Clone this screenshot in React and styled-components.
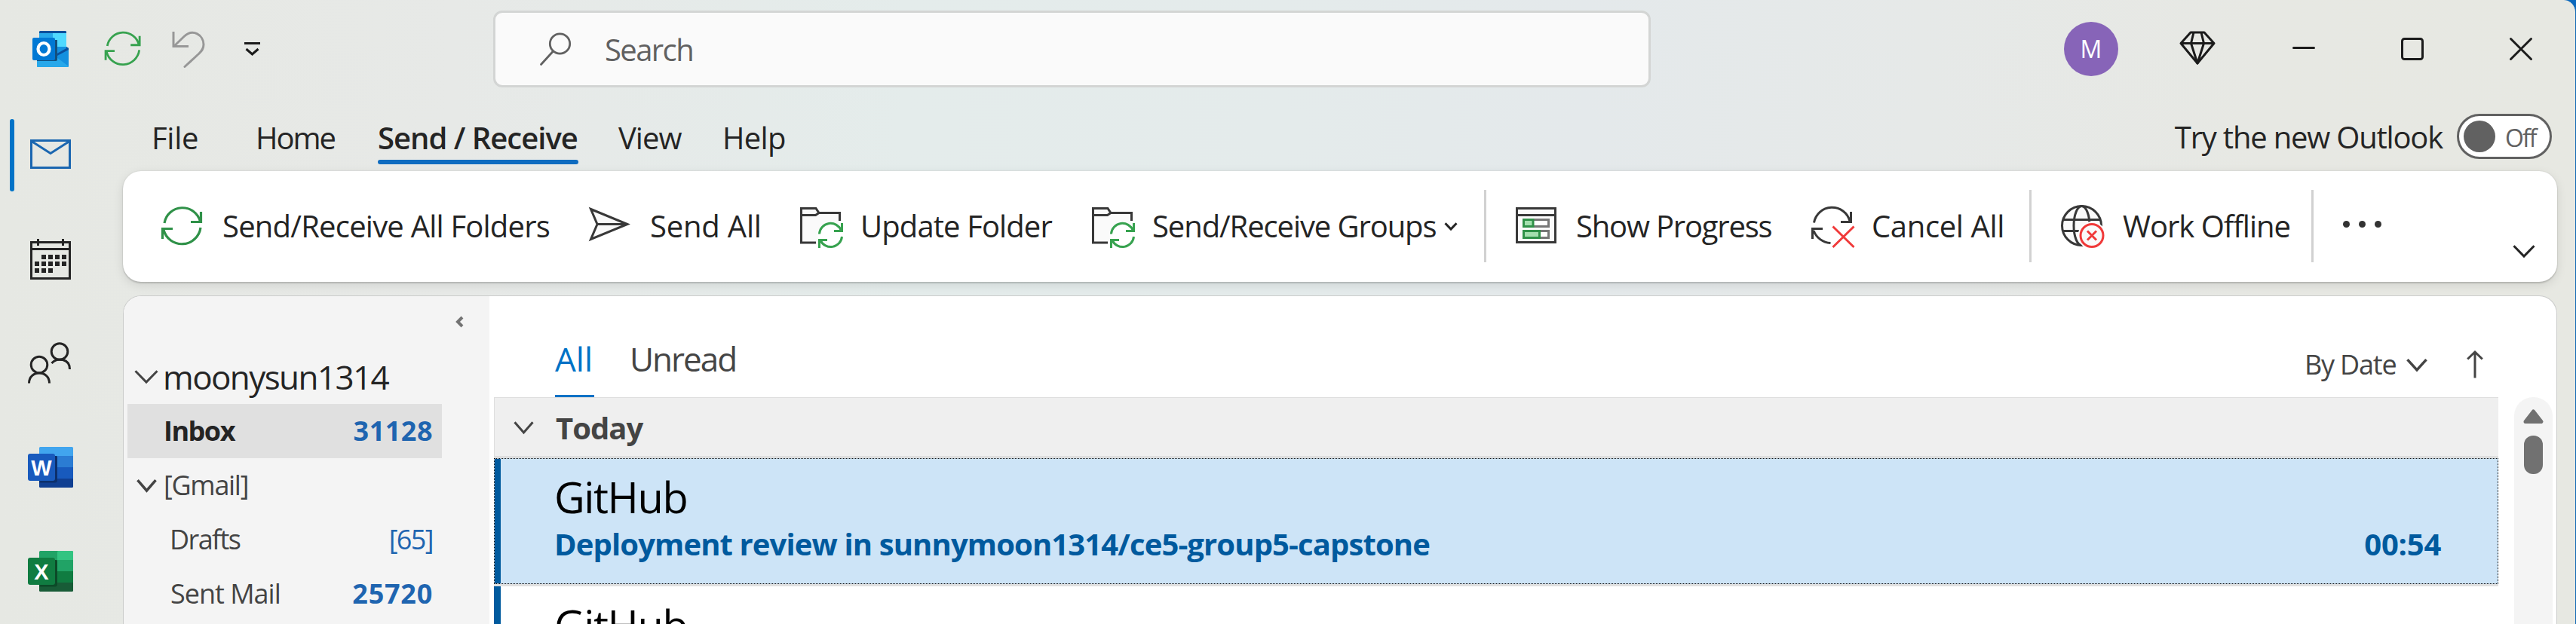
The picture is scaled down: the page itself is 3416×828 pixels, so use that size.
import React from 'react';
import styled, { createGlobalStyle } from 'styled-components';

const GlobalStyle = createGlobalStyle`
  * { box-sizing: border-box; }
  body { margin: 0; background: #0b68bd; overflow: hidden; }
  svg { display: block; flex: none; overflow: visible; }
`;

const Window = styled.div`
  width: 3416px;
  height: 828px;
  overflow: hidden;
  display: flex;
  flex-direction: column;
  border-right: 1px solid #1469b4;
  border-top-right-radius: 16px;
  background: linear-gradient(90deg, #e6e8e3 0, #e7e9e7 600px, #e4eceb 1200px, #e4ebeb 1700px, #e4e9eb 2100px, #e6e9e8 2550px, #e7e8e3 3000px, #e7e8e2 100%);
  font-family: "Open Sans", "Noto Sans", sans-serif;
  color: #242424;
`;

const Label = styled.span`
  flex: none;
  white-space: pre;
  font-size: ${(p) => p.$size || 40}px;
  font-weight: ${(p) => p.$weight || 400};
  letter-spacing: ${(p) => p.$track || 0}px;
  line-height: ${(p) => p.$line || 56}px;
  color: ${(p) => p.$color || 'inherit'};
`;

/* ---------- title bar ---------- */

const TitleBar = styled.header`
  flex: none;
  height: 130px;
  display: flex;
  align-items: center;
  padding-left: 43px;
`;

const QuickAccess = styled.div`
  width: 611px;
  display: flex;
  align-items: center;
`;

const QuickButton = styled.div`
  flex: none;
  width: ${(p) => p.$width}px;
  display: flex;
  align-items: center;
`;

const SearchBox = styled.div`
  width: 1535px;
  height: 102px;
  display: flex;
  align-items: center;
  gap: 44px;
  padding-left: 59px;
  border: 3px solid #d3d5d4;
  border-radius: 12px;
  background: #fafafa;
  color: #616161;
`;

const SearchLabel = styled(Label)`
  padding-top: 2px;
`;

const Avatar = styled.div`
  width: 72px;
  height: 72px;
  margin-left: 548px;
  border-radius: 50%;
  background: #8764b8;
  color: #fff;
  display: flex;
  align-items: center;
  justify-content: center;
`;

const WindowControls = styled.div`
  flex: none;
  display: flex;
  align-items: center;
  margin-left: 81px;
`;

const Control = styled.div`
  flex: none;
  width: ${(p) => p.$width}px;
`;

/* ---------- body ---------- */

const Body = styled.div`
  flex: 1;
  min-height: 0;
  display: flex;
`;

const Rail = styled.nav`
  flex: none;
  width: 163px;
  padding-top: 7px;
`;

const RailItem = styled.div`
  height: 138px;
  display: flex;
  align-items: center;
  padding-left: 13px;
  gap: 15px;
`;

const ActiveBar = styled.div`
  width: 6px;
  height: 96px;
  border-radius: 3px;
  background: ${(p) => (p.$on ? '#0173c7' : 'transparent')};
`;

const Main = styled.main`
  flex: none;
  width: 3228px;
  display: flex;
  flex-direction: column;
`;

const TabRow = styled.div`
  flex: none;
  height: 97px;
  display: flex;
  align-items: flex-start;
  padding: 25px 7px 0 38px;
`;

const RibbonTab = styled.div`
  flex: none;
  width: ${(p) => p.$width}px;
  height: 63px;
  display: flex;
  flex-direction: column;
  justify-content: space-between;
`;

const TabUnderline = styled.div`
  height: 6px;
  width: 266px;
  border-radius: 3px;
  background: #0f6cc0;
`;

const TryNew = styled.div`
  margin-left: auto;
  height: 60px;
  margin-top: -4px;
  display: flex;
  align-items: center;
  gap: 19px;
`;

const TryLabel = styled(Label)`
  padding-top: 2px;
`;

const Toggle = styled.div`
  width: 126px;
  height: 60px;
  border: 3px solid #616161;
  border-radius: 30px;
  background: #fff;
  display: flex;
  align-items: center;
  gap: 13px;
  padding-left: 6px;
`;

const ToggleLabel = styled(Label)`
  padding-top: 3px;
`;

const Knob = styled.div`
  width: 42px;
  height: 42px;
  border-radius: 50%;
  background: #616161;
`;

const Ribbon = styled.div`
  flex: none;
  height: 147px;
  display: flex;
  align-items: flex-start;
  padding: 25px 29px 0 49px;
  border-radius: 24px;
  background: #fff;
  box-shadow: 0 2px 2px rgba(0, 0, 0, 0.14), 0 0 2px rgba(0, 0, 0, 0.12), 0 4px 14px rgba(0, 0, 0, 0.1);
`;

const RibbonButton = styled.div`
  flex: none;
  width: ${(p) => p.$width}px;
  height: 98px;
  display: flex;
  align-items: center;
  gap: 23px;
`;

const CommandLabel = styled(Label)`
  padding-bottom: 3px;
`;

const MenuArrow = styled.div`
  margin: 0 0 2px -12px;
`;

const Divider = styled.div`
  flex: none;
  width: 3px;
  height: 96px;
  margin-right: ${(p) => p.$after}px;
  background: #d1d1d1;
`;

const More = styled.div`
  display: flex;
  gap: 12px;
  padding-top: 41px;
`;

const Dot = styled.i`
  width: 9px;
  height: 9px;
  border-radius: 50%;
  background: #333;
`;

const Collapse = styled.div`
  margin: 73px 0 0 auto;
`;

const Panel = styled.section`
  flex: 1;
  min-height: 0;
  margin-top: 18px;
  display: flex;
  overflow: hidden;
  background: #fff;
  border: 1px solid #cbcccb;
  border-bottom: 0;
  border-radius: 24px 24px 0 0;
`;

const Folders = styled.aside`
  flex: none;
  width: 485px;
  padding: 27px 63px 0 5px;
  background: #f4f4f4;
`;

const CollapsePane = styled.div`
  height: 44px;
  width: 445px;
  display: flex;
  justify-content: flex-end;
`;

const FolderRow = styled.div`
  height: 72px;
  display: flex;
  align-items: center;
  padding: 0 12px ${(p) => p.$lift || 0}px ${(p) => p.$indent}px;
  gap: ${(p) => p.$gap || 0}px;
  background: ${(p) => (p.$selected ? '#e0e0e0' : 'transparent')};
  color: ${(p) => p.$color || '#444'};
`;

const Count = styled(Label)`
  margin-left: auto;
  color: #1f65b0;
`;

const MessagePane = styled.div`
  flex: none;
  width: 2664px;
  margin-left: 6px;
`;

const ListHeader = styled.div`
  height: 134px;
  display: flex;
  padding: 53px 26px 0 81px;
  color: #444;
`;

const FilterTab = styled.div`
  flex: none;
  width: ${(p) => p.$width}px;
  margin-right: 47px;
  display: flex;
  flex-direction: column;
  justify-content: space-between;
  color: ${(p) => (p.$active ? '#0072c6' : '#444')};
  border-bottom: 3px solid ${(p) => (p.$active ? '#0072c6' : 'transparent')};
`;

const Sort = styled.div`
  margin: 8px 0 0 auto;
  height: 60px;
  display: flex;
  align-items: center;
`;

const ListColumns = styled.div`
  display: flex;
`;

const List = styled.div`
  flex: none;
  width: 2658px;
`;

const GroupHeader = styled.div`
  height: 81px;
  display: flex;
  align-items: center;
  gap: 29px;
  padding: 2px 0 0 25px;
  background: #efefef;
  border: 0 solid #dedede;
  border-width: 1px 0 3px 1px;
  color: #444;
`;

const MailSlot = styled.article`
  height: 170px;
  border-bottom: 3px solid #e0e0e0;
`;

const Mail = styled.div`
  height: 167px;
  display: flex;
  align-items: stretch;
  border: 1px ${(p) => (p.$selected ? 'dotted #111' : 'solid transparent')};
  background: ${(p) => (p.$selected ? '#cde4f7' : '#fff')};
`;

const UnreadBar = styled.div`
  flex: none;
  width: ${(p) => (p.$wide ? 9 : 8)}px;
  margin: ${(p) => (p.$wide ? '-1px 0 -1px -1px' : '0')};
  background: #005a9e;
`;

const MailText = styled.div`
  flex: 1;
  padding: 22px 75px 0 71px;
`;

const SubjectRow = styled.div`
  display: flex;
  justify-content: space-between;
  margin-top: 7px;
`;

const Scrollbar = styled.div`
  flex: none;
  width: 51px;
  height: 340px;
  margin-left: 21px;
  padding-top: 16px;
  display: flex;
  flex-direction: column;
  align-items: center;
  gap: 16px;
  border-radius: 25px 25px 0 0;
  background: #f4f4f4;
`;

const Thumb = styled.div`
  width: 25px;
  height: 51px;
  border-radius: 12px;
  background: #717171;
`;

/* ---------- icons ---------- */

const Chevron = ({ width, height, stroke = 3, color = '#242424' }) => (
  <svg width={width} height={height} fill="none" stroke={color} strokeWidth={stroke}>
    <path d={`M1.5 1.2 L${width / 2} ${height - 2} L${width - 1.5} 1.2`} />
  </svg>
);

const SyncIcon = ({ size = 60, color = '#2f9148' }) => (
  <svg width={size} height={size} viewBox="0 0 60 60" fill="none" stroke={color} strokeWidth="3.2">
    <path d="M6 25 A24.3 24.3 0 0 1 53.5 23" />
    <path d="M54.5 10 V23.5 H41" />
    <path d="M54 31 A25 25 0 0 1 5 34" />
    <path d="M3.5 46 V32.5 H17" />
  </svg>
);

const SendIcon = () => (
  <svg width="60" height="60" fill="#fafafa" stroke="#383838" strokeWidth="3">
    <path d="M4.5 6.5 L53 26.5 L4.5 46.5 L13 26.5 Z" />
    <path d="M13 26.5 H53" />
  </svg>
);

const FolderSyncIcon = () => (
  <svg width="60" height="60" fill="none" strokeWidth="3">
    <path d="M5 5.5 H24 L28 11.5 H55.5 V24 L30 40 L25 51 H5 Z" fill="#fafafa" />
    <g stroke="#383838">
      <path d="M24 51 H4.5 V5.5 H24 L28 11.5 H55.5 V22" />
      <path d="M4.5 14.5 H23.5 L28 11.5" />
    </g>
    <circle cx="43.5" cy="41.5" r="17" fill="#fff" />
    <g stroke="#37a24f">
      <path d="M28.5 39.5 A15 15 0 0 1 57.5 35" />
      <path d="M58.5 25 V35.5 H48" />
      <path d="M58.5 43 A15 15 0 0 1 30 48" />
      <path d="M28.5 58 V47.5 H39" />
    </g>
  </svg>
);

const ProgressIcon = () => (
  <svg width="60" height="60" strokeWidth="3">
    <g fill="#fafafa" stroke="#383838">
      <rect x="4.5" y="5.5" width="51" height="45" />
      <path d="M4.5 14.5 H55.5" />
    </g>
    <g fill="#fff" stroke="#777">
      <rect x="13.5" y="20.5" width="33" height="9" />
      <rect x="13.5" y="35.5" width="33" height="9" />
    </g>
    <g fill="#a3dfae" stroke="#2f9148">
      <rect x="13.5" y="20.5" width="12.5" height="9" />
      <rect x="13.5" y="35.5" width="21" height="9" />
    </g>
  </svg>
);

const CancelIcon = () => (
  <svg width="60" height="60" fill="none" strokeWidth="3">
    <g stroke="#383838">
      <path d="M6.5 24.5 A24.3 24.3 0 0 1 54 22.5" />
      <path d="M55.5 10 V23.5 H42" />
      <path d="M6 35 A25.5 25.5 0 0 0 28.5 51.5" />
      <path d="M4.5 46 V32.5 H18" />
    </g>
    <path d="M31.5 29.5 L59.5 57 M59.5 29.5 L31.5 57" stroke="#f03a3a" />
  </svg>
);

const GlobeIcon = () => (
  <svg width="60" height="60" fill="none" strokeWidth="3">
    <g stroke="#383838">
      <circle cx="28.5" cy="28.5" r="26" fill="#fafafa" />
      <ellipse cx="28.5" cy="28.5" rx="10.5" ry="26" />
      <path d="M4 20.5 H53 M4 35.5 H53" />
    </g>
    <circle cx="42" cy="41.5" r="18.5" fill="#fff" />
    <circle cx="42" cy="41.5" r="15" fill="#fafafa" stroke="#f03a3a" />
    <path d="M36 35.5 L48 47.5 M48 35.5 L36 47.5" stroke="#f03a3a" />
  </svg>
);

const UndoIcon = () => (
  <svg width="44" height="50" fill="none" stroke="#979797" strokeWidth="3">
    <path d="M2 2 V21.5 H22" />
    <path d="M3 21 L16 8.5 C28 -3 42 7 42 19 C42 25 39 28 36 31 L17 48.5" strokeLinecap="round" />
  </svg>
);

const CustomizeIcon = () => (
  <svg width="21" height="18" fill="none" stroke="#1b1b1b" strokeWidth="3">
    <path d="M0 1.5 H21 M2.5 9 L10.5 16 L18.5 9" />
  </svg>
);

const OutlookIcon = () => (
  <svg width="48" height="48">
    <rect x="9" width="36" height="24" rx="1.5" fill="#28a8ea" />
    <rect x="27" y="3" width="18" height="18" fill="#50d9ff" />
    <path d="M9 3 V1.5 Q9 0 10.5 0 H43.5 Q45 0 45 1.5 V3 Z" fill="#0a4f9c" />
    <path d="M6 21 H45 L48 23 V46.5 Q48 48 46.5 48 H7.5 Q6 48 6 46.5 Z" fill="#1490df" />
    <path d="M32 35 L48 47 Q47.5 48 46 48 H7.5 Q6 48 6 46.5 V40 Z" fill="#28a8ea" />
    <path d="M45 21 L48 23 V25 L31 34 V31 L45 23 Z" fill="#0a4f9c" />
    <path d="M6 40 H31 Q33 40 33 38 V12 H9 Z" fill="#14507c" />
    <rect y="9" width="30" height="30" rx="2" fill="#0078d4" />
    <ellipse cx="15" cy="24" rx="7.5" ry="8" fill="none" stroke="#fff" strokeWidth="4.2" />
  </svg>
);

const SearchIcon = () => (
  <svg width="42" height="44" fill="none" stroke="#616161" strokeWidth="2.8">
    <circle cx="26.5" cy="15" r="13.2" />
    <path d="M17.5 25 L1.5 42.5" strokeLinecap="round" />
  </svg>
);

const DiamondIcon = () => (
  <svg width="48" height="48" fill="none" stroke="#1b1b1b" strokeWidth="3" strokeLinejoin="round">
    <path d="M15 2 H33 L46 16.5 L24 43 L2 16.5 Z M2 16.5 H46" />
    <path d="M19 2 L15.5 16.5 L24 43 L32.5 16.5 L29 2" />
  </svg>
);

const MinimizeIcon = () => (
  <svg width="30" height="30" stroke="#1b1b1b" strokeWidth="3" strokeLinecap="round">
    <path d="M1.5 13.5 H28.5" />
  </svg>
);

const MaximizeIcon = () => (
  <svg width="30" height="30" fill="none" stroke="#1b1b1b" strokeWidth="3">
    <rect x="1.5" y="1.5" width="27" height="27" rx="3" />
  </svg>
);

const CloseIcon = () => (
  <svg width="30" height="30" stroke="#1b1b1b" strokeWidth="3" strokeLinecap="round">
    <path d="M1.5 1.5 L28.5 28.5 M28.5 1.5 L1.5 28.5" />
  </svg>
);

const MailIcon = () => (
  <svg width="66" height="60" fill="none" stroke="#1a66b0" strokeWidth="3">
    <rect x="7.5" y="10.5" width="51" height="36" />
    <path d="M8 11.5 L33 27.5 L58 11.5" />
  </svg>
);

const CALENDAR_DAYS = [
  [1, 2, 3, 4],
  [0, 1, 2, 3, 4],
  [0, 1, 2],
];

const CalendarIcon = () => (
  <svg width="66" height="60">
    <g fill="none" stroke="#242424" strokeWidth="3">
      <rect x="7.5" y="7.5" width="51" height="48" />
      <path d="M7.5 16.5 H58.5 M16.5 3 V12 M49.5 3 V12" />
    </g>
    {CALENDAR_DAYS.map((days, row) =>
      days.map((day) => (
        <rect key={`${row}-${day}`} x={12 + day * 9} y={24 + row * 9} width="6" height="6" fill="#242424" />
      ))
    )}
  </svg>
);

const PeopleIcon = () => (
  <svg width="66" height="60" fill="none" stroke="#242424" strokeWidth="3">
    <circle cx="18" cy="32" r="10.8" />
    <path d="M4.5 56.5 C4.5 38.5 31.5 38.5 31.5 56.5" />
    <circle cx="45" cy="14.5" r="10.8" />
    <path d="M34.5 30 C42 21.5 58.5 24 58.5 38" />
  </svg>
);

const OfficeTile = styled.text`
  font: 700 29px "Liberation Sans", Arial, sans-serif;
  fill: #fff;
  text-anchor: middle;
`;

const OfficeIcon = ({ letter, bands, square, shadow, corner }) => (
  <svg width="66" height="60">
    <rect x="18" y="3" width="45" height="14" rx="1.5" fill={bands[0]} />
    {corner && <rect x="42" y="3" width="21" height="14" rx="1.5" fill={corner} />}
    <rect x="18" y="15" width="45" height="15" fill={bands[1]} />
    <rect x="18" y="30" width="45" height="15" fill={bands[2]} />
    <path d="M18 45 H63 V55.5 Q63 57 61.5 57 H19.5 Q18 57 18 55.5 Z" fill={bands[3]} />
    <path d="M18 15 H41 Q42 15 42 17 V47.5 Q42 50.5 39 50.5 H18 Z" fill={shadow} />
    <rect x="3" y="12" width="36" height="36" rx="3" fill={square} />
    <OfficeTile x="21" y="40.5">{letter}</OfficeTile>
  </svg>
);

const ArrowUpIcon = () => (
  <svg width="22" height="39" fill="none" stroke="#444" strokeWidth="3">
    <path d="M11 36.5 V2 M1.2 11.5 L11 2 L20.8 11.5" />
  </svg>
);

const ScrollUpIcon = () => (
  <svg width="27" height="19" fill="#717171" stroke="#717171" strokeWidth="5" strokeLinejoin="round">
    <path d="M13.5 3 L24 16.5 H3 Z" />
  </svg>
);

const CollapsePaneIcon = () => (
  <svg width="10" height="14" fill="none" stroke="#737373" strokeWidth="4">
    <path d="M9 1 L3 7 L9 13" />
  </svg>
);

const WORD_BANDS = ['#41a5ee', '#2b7cd3', '#185abd', '#103f91'];
const EXCEL_BANDS = ['#21a366', '#21a366', '#107c41', '#185c37'];

/* ---------- sections ---------- */

const Top = () => (
  <TitleBar>
    <QuickAccess>
      <QuickButton $width={94}><OutlookIcon /></QuickButton>
      <QuickButton $width={91}><SyncIcon size={53} color="#37a24f" /></QuickButton>
      <QuickButton $width={96}><UndoIcon /></QuickButton>
      <QuickButton $width={21}><CustomizeIcon /></QuickButton>
    </QuickAccess>
    <SearchBox>
      <SearchIcon />
      <SearchLabel $track={-1.6}>Search</SearchLabel>
    </SearchBox>
    <Avatar><Label $size={32} $line={40}>M</Label></Avatar>
    <WindowControls>
      <Control $width={150}><DiamondIcon /></Control>
      <Control $width={144}><MinimizeIcon /></Control>
      <Control $width={144}><MaximizeIcon /></Control>
      <Control $width={30}><CloseIcon /></Control>
    </WindowControls>
  </TitleBar>
);

const Tabs = () => (
  <TabRow>
    <RibbonTab $width={138}><Label $track={-0.3}>File</Label></RibbonTab>
    <RibbonTab $width={162}><Label $track={-2}>Home</Label></RibbonTab>
    <RibbonTab $width={319}>
      <Label $weight={600} $track={-1}>Send / Receive</Label>
      <TabUnderline />
    </RibbonTab>
    <RibbonTab $width={138}><Label $track={-1}>View</Label></RibbonTab>
    <RibbonTab $width={120}><Label $track={-0.7}>Help</Label></RibbonTab>
    <TryNew>
      <TryLabel $track={-1.2}>Try the new Outlook</TryLabel>
      <Toggle>
        <Knob />
        <ToggleLabel $size={32} $track={-2} $line={40} $color="#616161">Off</ToggleLabel>
      </Toggle>
    </TryNew>
  </TabRow>
);

const Commands = () => (
  <Ribbon>
    <RibbonButton $width={567}><SyncIcon /><CommandLabel $track={-0.78}>Send/Receive All Folders</CommandLabel></RibbonButton>
    <RibbonButton $width={279}><SendIcon /><CommandLabel $track={-0.2}>Send All</CommandLabel></RibbonButton>
    <RibbonButton $width={387}><FolderSyncIcon /><CommandLabel $track={-0.9}>Update Folder</CommandLabel></RibbonButton>
    <RibbonButton $width={523}>
      <FolderSyncIcon />
      <CommandLabel $track={-1.1}>Send/Receive Groups</CommandLabel>
      <MenuArrow><Chevron width={18} height={11} /></MenuArrow>
    </RibbonButton>
    <Divider $after={36} />
    <RibbonButton $width={392}><ProgressIcon /><CommandLabel $track={-1.2}>Show Progress</CommandLabel></RibbonButton>
    <RibbonButton $width={292}><CancelIcon /><CommandLabel $track={-0.35}>Cancel All</CommandLabel></RibbonButton>
    <Divider $after={38} />
    <RibbonButton $width={333}><GlobeIcon /><CommandLabel $track={-1}>Work Offline</CommandLabel></RibbonButton>
    <Divider $after={39} />
    <More><Dot /><Dot /><Dot /></More>
    <Collapse><Chevron width={30} height={17} /></Collapse>
  </Ribbon>
);

const FolderPane = () => (
  <Folders>
    <CollapsePane><CollapsePaneIcon /></CollapsePane>
    <FolderRow $indent={9} $gap={6} $lift={1} $color="#242424">
      <Chevron width={32} height={18} color="#444" />
      <Label $size={44} $track={-1.6}>moonysun1314</Label>
    </FolderRow>
    <FolderRow $indent={48} $selected $color="#242424">
      <Label $size={36} $weight={700} $track={-1.5}>Inbox</Label>
      <Count $size={36} $weight={700} $track={0.5}>31128</Count>
    </FolderRow>
    <FolderRow $indent={12} $gap={9}>
      <Chevron width={27} height={17} stroke={3.5} color="#444" />
      <Label $size={36} $track={-1.3}>[Gmail]</Label>
    </FolderRow>
    <FolderRow $indent={56}>
      <Label $size={36} $track={-1.6}>Drafts</Label>
      <Count $size={36} $track={-1.6}>[65]</Count>
    </FolderRow>
    <FolderRow $indent={57}>
      <Label $size={36} $track={-1}>Sent Mail</Label>
      <Count $size={36} $weight={700} $track={0.75}>25720</Count>
    </FolderRow>
  </Folders>
);

const Messages = () => (
  <MessagePane>
    <ListHeader>
      <FilterTab $active $width={52}><Label $size={44} $line={60}>All</Label></FilterTab>
      <FilterTab $width={150}><Label $size={44} $line={60} $track={-2}>Unread</Label></FilterTab>
      <Sort>
        <Control $width={135}><Label $size={36} $line={60} $track={-1.2}>By Date</Label></Control>
        <Control $width={80}><Chevron width={28} height={17} stroke={3.5} color="#444" /></Control>
        <ArrowUpIcon />
      </Sort>
    </ListHeader>
    <ListColumns>
      <List>
        <GroupHeader>
          <Chevron width={27} height={17} color="#444" />
          <Label $weight={700} $track={-1}>Today</Label>
        </GroupHeader>
        <MailSlot>
          <Mail $selected>
            <UnreadBar />
            <MailText>
              <Label $size={56} $track={-1.4} $color="#000">GitHub</Label>
              <SubjectRow>
                <Label $weight={700} $track={-0.88} $color="#005a9e">Deployment review in sunnymoon1314/ce5-group5-capstone</Label>
                <Label $weight={700} $track={-0.25} $color="#005a9e">00:54</Label>
              </SubjectRow>
            </MailText>
          </Mail>
        </MailSlot>
        <MailSlot>
          <Mail>
            <UnreadBar $wide />
            <MailText>
              <Label $size={56} $track={-1.4} $color="#000">GitHub</Label>
            </MailText>
          </Mail>
        </MailSlot>
      </List>
      <Scrollbar>
        <ScrollUpIcon />
        <Thumb />
      </Scrollbar>
    </ListColumns>
  </MessagePane>
);

export default function App() {
  return (
    <>
      <GlobalStyle />
      <Window>
        <Top />
        <Body>
          <Rail>
            <RailItem><ActiveBar $on /><MailIcon /></RailItem>
            <RailItem><ActiveBar /><CalendarIcon /></RailItem>
            <RailItem><ActiveBar /><PeopleIcon /></RailItem>
            <RailItem><ActiveBar /><OfficeIcon letter="W" bands={WORD_BANDS} square="#185abd" shadow="#0c2f6b" /></RailItem>
            <RailItem><ActiveBar /><OfficeIcon letter="X" bands={EXCEL_BANDS} square="#107c41" shadow="#0c4a28" corner="#33c481" /></RailItem>
          </Rail>
          <Main>
            <Tabs />
            <Commands />
            <Panel>
              <FolderPane />
              <Messages />
            </Panel>
          </Main>
        </Body>
      </Window>
    </>
  );
}
